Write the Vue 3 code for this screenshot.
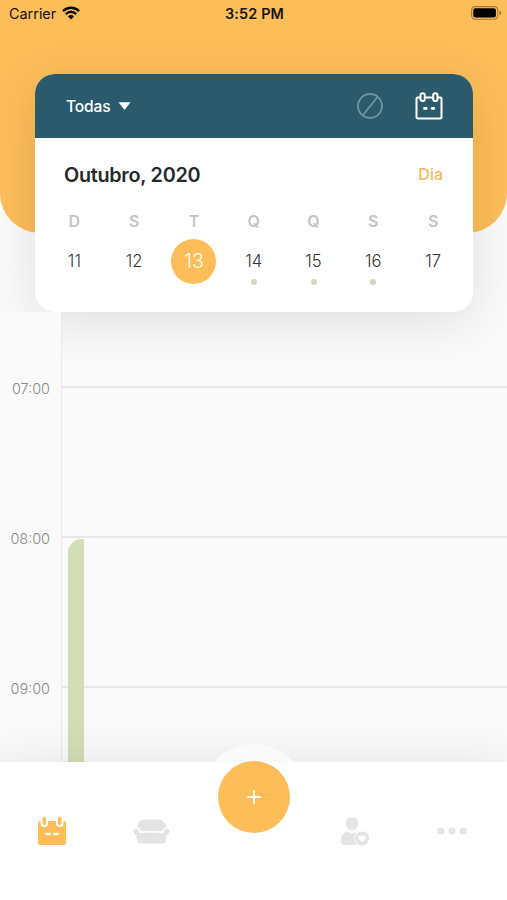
<template>
  <div class="screen">
    <header class="header">
      <div class="header-bg"></div>

      <!-- status bar -->
      <div class="status-bar">
        <div class="carrier">
          <span>Carrier</span>
          <svg class="wifi" viewBox="0 0 18 14">
            <path d="M1 5.100C5.600.7 12.400.7 17 5.100" />
            <path d="M3.800 8.200C7 5.200 11 5.200 14.200 8.200" />
            <path class="wifi-dot" d="M5.900 10.400Q9 7.800 12.100 10.400L9 13.600Z" />
          </svg>
        </div>
        <span class="clock">3:52 PM</span>
        <div class="power">
          <svg class="battery" viewBox="0 0 31 14">
            <rect class="battery-frame" x=".6" y=".6" width="26.200" height="12.600" rx="3.600" />
            <rect x="2.300" y="2.300" width="22.600" height="9.200" rx="2" />
            <path class="battery-tip" d="M28.300 4.700Q30.300 5.300 30.300 7T28.300 9.200Z" />
          </svg>
        </div>
      </div>

      <!-- calendar card -->
      <section class="card">
        <div class="card-bar">
          <button class="filter">
            <span>Todas</span>
            <svg class="caret" viewBox="0 0 13 8"><path d="M.5.3h12L7.100 7.300Q6.500 8 5.900 7.300Z" /></svg>
          </button>
          <div class="card-actions">
            <svg class="icon-block" viewBox="0 0 26 26">
              <circle cx="13" cy="13" r="12" />
              <path d="M6 22L20.500 4" />
            </svg>
            <svg class="icon-calendar" viewBox="0 0 28 28">
              <path d="M5.300 5.600H2.500Q1.500 5.600 1.500 6.600V25Q1.500 26.500 3 26.500H25Q26.500 26.500 26.500 25V6.600Q26.500 5.600 25.500 5.600H22.700M10 5.600H18" />
              <rect x="5.500" y="1.300" width="4.300" height="7.800" rx="2.100" />
              <rect x="18.200" y="1.300" width="4.300" height="7.800" rx="2.100" />
              <path class="dashes" d="M9.500 16.400h1.800M17 16.400h1.800" />
            </svg>
          </div>
        </div>

        <div class="card-title">
          <h1>{{ month }}</h1>
          <button class="mode">Dia</button>
        </div>

        <div class="week">
          <div v-for="day in days" :key="day.number" class="day" @click="selected = day.number">
            <span class="weekday">{{ day.weekday }}</span>
            <span class="number" :class="{ selected: day.number === selected }">{{ day.number }}</span>
            <span v-if="day.busy" class="dot"></span>
          </div>
        </div>
      </section>
    </header>

    <!-- hours -->
    <main class="schedule">
      <div class="hours">
        <span v-for="hour in hours" :key="hour" class="hour">{{ hour }}</span>
      </div>
      <div class="slots">
        <div v-for="hour in hours" :key="hour" class="slot"></div>
        <div class="event"></div>
      </div>
    </main>

    <!-- bottom navigation -->
    <nav class="tabs">
      <div class="halo"></div>
      <div class="tabs-bg"></div>
      <button class="tab">
        <svg class="tab-calendar" viewBox="0 0 30 30">
          <path class="fill" d="M1 7Q1 5 3 5H27Q29 5 29 7V27Q29 29 27 29H3Q1 29 1 27Z" />
          <path class="cut" d="M7.300 2.500V7.300M22.700 2.500V7.300" />
          <path class="ring" d="M7.300 2.500V7.300M22.700 2.500V7.300" />
          <path class="mark" d="M9.500 18h3M17.500 18h3" />
        </svg>
      </button>
      <button class="tab">
        <svg class="tab-sofa" viewBox="0 0 37 25">
          <path d="M3.500 7.500L7 2Q8 .5 10 .5H27Q29 .5 30 2L34 7.500Q30.500 8.500 29.500 12.300Q18.500 11.500 7.500 12.300Q7 8.500 3.500 7.500Z" />
          <path d="M.5 12.500Q.6 9.500 3.200 9.500Q5.700 9.700 6.300 14Q18.500 13.200 30.700 14Q31.300 9.500 33.800 9.500Q36.400 9.800 36.400 12.500Q36.200 15 33.800 16.300L32.800 22.500Q32.500 24.500 30.500 24.500H6.500Q4.700 24.500 4.300 22.500L3.200 16.300Q.7 15 .5 12.500Z" />
        </svg>
      </button>
      <button class="add" aria-label="Adicionar">
        <svg viewBox="0 0 14 14"><path d="M7 1V13M1 7H13" /></svg>
      </button>
      <button class="tab">
        <svg class="tab-user" viewBox="0 0 30 29">
          <path d="M6 5Q6.500.5 12 .5T18 5V8Q17.200 13.200 12 13.500Q6.800 13.200 6 8Z" />
          <path d="M1 25Q.5 16 7 14.800Q12 17.500 16.500 15Q14.500 17.500 14.500 21.500Q14.500 25.500 17 28H4Q1 28 1 25Z" />
          <circle cx="22" cy="21.500" r="7" />
          <path class="heart" d="M22 25.200L18.300 21.500Q17.800 18.300 20.500 18.400L22 19L23.500 18.400Q26.300 18.300 25.700 21.500Z" />
        </svg>
      </button>
      <button class="tab">
        <svg class="tab-more" viewBox="0 0 30 8">
          <circle cx="4" cy="4" r="3.600" />
          <circle cx="15" cy="4" r="3.600" />
          <circle cx="26" cy="4" r="3.600" />
        </svg>
      </button>
    </nav>
  </div>
</template>

<script setup>
import { ref } from 'vue'

const month = 'Outubro, 2020'
const selected = ref(13)

const days = [
  { weekday: 'D', number: 11 },
  { weekday: 'S', number: 12 },
  { weekday: 'T', number: 13 },
  { weekday: 'Q', number: 14, busy: true },
  { weekday: 'Q', number: 15, busy: true },
  { weekday: 'S', number: 16, busy: true },
  { weekday: 'S', number: 17 }
]

const hours = ['07:00', '08:00', '09:00']
</script>

<style>
body {
  margin: 0;
}
</style>

<style scoped>
.screen {
  width: 507px;
  height: 900px;
  display: flex;
  flex-direction: column;
  overflow: hidden;
  background: #fafafa;
  font-family: Inter, "Liberation Sans", sans-serif;
}

button {
  padding: 0;
  border: none;
  background: none;
  font-family: inherit;
  cursor: pointer;
}

svg {
  display: block;
}

/* header */
.header {
  position: relative;
  height: 312px;
  flex-shrink: 0;
}

.header-bg {
  position: absolute;
  top: 0;
  left: 0;
  right: 0;
  height: 233px;
  border-radius: 0 0 40px 40px;
  background: #fdbd59;
}

.status-bar {
  position: relative;
  height: 74px;
  box-sizing: border-box;
  padding: 5px 7px 0 9px;
  display: grid;
  grid-template-columns: 1fr auto 1fr;
  align-items: start;
  font-size: 14.4px;
  line-height: 18px;
  color: #17130a;
}

.carrier {
  display: flex;
  gap: 6px;
}

.wifi {
  width: 18px;
  height: 14px;
  margin-top: 1px;
  fill: none;
  stroke: #000;
  stroke-width: 2.4;
}

.wifi .wifi-dot {
  fill: #000;
  stroke: none;
}

.clock {
  font-weight: 600;
  font-size: 14.4px;
  letter-spacing: 0.15px;
}

.power {
  display: flex;
  justify-content: flex-end;
}

.battery {
  width: 31px;
  height: 14px;
  margin: 1px -2px 0 0;
}

.battery-frame {
  fill: none;
  stroke: #a17838;
  stroke-width: 1.1;
}

.battery-tip {
  fill: #a17838;
}

/* card */
.card {
  position: relative;
  width: 438px;
  height: 238px;
  margin-left: 35px;
  border-radius: 20px;
  background: #fff;
  box-shadow: 0 10px 50px rgba(0, 0, 0, 0.11);
}

.card-bar {
  height: 64px;
  box-sizing: border-box;
  padding: 0 30px 0 31px;
  display: flex;
  align-items: center;
  justify-content: space-between;
  border-radius: 20px 20px 0 0;
  background: #2a5a6b;
}

.filter {
  display: flex;
  align-items: center;
  gap: 7px;
  color: #fff;
  font-size: 15.6px;
  font-weight: 500;
  letter-spacing: -0.15px;
}

.caret {
  width: 13px;
  height: 8px;
  fill: #fff;
}

.card-actions {
  display: flex;
  align-items: center;
  gap: 32px;
}

.icon-block {
  width: 26px;
  height: 26px;
  fill: none;
  stroke: #6d96a5;
  stroke-width: 1.8;
}

.icon-calendar {
  width: 28px;
  height: 28px;
  fill: none;
  stroke: #fff;
  stroke-width: 2;
}

.icon-calendar .dashes {
  stroke-width: 2.8;
  stroke-linecap: round;
}

.card-title {
  height: 74px;
  padding: 0 30px 0 29px;
  display: flex;
  align-items: center;
  justify-content: space-between;
}

.card-title h1 {
  margin: 0;
  font-size: 19.8px;
  font-weight: 600;
  letter-spacing: -0.28px;
  color: #26292c;
}

.mode {
  margin-top: -2px;
  color: #fbb850;
  font-size: 16px;
  font-weight: 500;
}

.week {
  display: grid;
  grid-template-columns: repeat(7, 1fr);
  padding: 0 10px 0 9.5px;
}

.day {
  display: flex;
  flex-direction: column;
  align-items: center;
}

.weekday {
  height: 27px;
  line-height: 19px;
  font-size: 16px;
  font-weight: 600;
  color: #c4c4c4;
}

.number {
  width: 45px;
  height: 45px;
  line-height: 45px;
  border-radius: 50%;
  text-align: center;
  font-size: 16.6px;
  font-weight: 300;
  color: #333;
}

.number.selected {
  background: #fdbd59;
  color: #fff;
  font-size: 19.4px;
}

.dot {
  width: 6px;
  height: 6px;
  margin-top: -5px;
  border-radius: 50%;
  background: #d2d8ba;
}

/* schedule */
.schedule {
  height: 450px;
  flex-shrink: 0;
  display: flex;
  overflow: hidden;
}

.hours {
  position: relative;
  width: 61px;
  box-sizing: border-box;
  padding-top: 67px;
  background: #fafafa;
}

.hour {
  display: block;
  height: 150px;
  padding-right: 11px;
  line-height: 19px;
  text-align: right;
  font-size: 14.4px;
  font-weight: 300;
  color: #888;
}

.slots {
  position: relative;
  flex: 1;
  border-left: 1px solid #e9e9e9;
  padding-top: 74px;
}

.slot {
  height: 150px;
  box-sizing: border-box;
  border-top: 2px solid #e8e8e8;
}

.event {
  position: absolute;
  top: 227px;
  left: 6px;
  width: 16px;
  bottom: 0;
  border-radius: 14px 0 0 0;
  background: #d2deb6;
}

/* tabs */
.tabs {
  position: relative;
  height: 138px;
  display: flex;
  align-items: flex-start;
  box-shadow: 0 0 50px rgba(0, 0, 0, 0.09);
}

.halo {
  position: absolute;
  top: -18px;
  left: 201px;
  width: 106px;
  height: 106px;
  border-radius: 50%;
  background: #fafafa;
}

.tabs-bg {
  position: absolute;
  inset: 0;
  background: #fff;
}

.tab {
  position: relative;
  width: 100px;
  height: 138px;
  display: flex;
  justify-content: center;
  align-items: center;
  fill: #e4e4e4;
}

.add {
  position: relative;
  width: 72px;
  height: 72px;
  margin: -1px 15px 0 18px;
  display: flex;
  justify-content: center;
  align-items: center;
  border-radius: 50%;
  background: #fdbd59;
}

.add svg {
  width: 14px;
  height: 14px;
  fill: none;
  stroke: #fff;
  stroke-width: 1.9;
  stroke-linecap: round;
}

.tab-calendar {
  width: 30px;
  height: 30px;
  margin-left: 3px;
  overflow: visible;
  fill: none;
  stroke-linecap: round;
}

.tab-calendar .fill {
  fill: #fdbd59;
}

.tab-calendar .cut {
  stroke: #fff;
  stroke-width: 7.6;
}

.tab-calendar .ring {
  stroke: #fdbd59;
  stroke-width: 3.6;
}

.tab-calendar .mark {
  stroke: #fff;
  stroke-width: 2.6;
}

.tab-sofa {
  width: 37px;
  height: 25px;
  margin-left: 3px;
}

.tab-user {
  width: 30px;
  height: 29px;
}

.tab-user .heart {
  fill: #fff;
}

.tab-more {
  width: 30px;
  height: 8px;
  margin-right: 6px;
}
</style>
